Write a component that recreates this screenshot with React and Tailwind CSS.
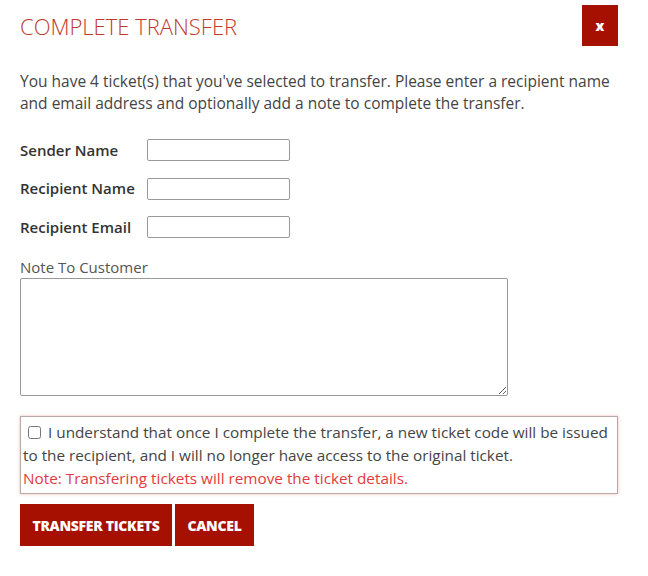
export default function App() {
  return (
    <div className="min-h-screen bg-white font-['Open_Sans',sans-serif] text-[#444]">
      <div className="pl-[20px] pr-[30px]">
        <div className="flex items-start justify-between pt-[5px]">
          <h1 className="mt-[6px] text-[22px] font-light leading-[30px] text-[#c0392b]">
            COMPLETE TRANSFER
          </h1>
          <button className="flex h-[41px] w-[36px] items-center justify-center bg-[#a51000] text-[14px] font-extrabold text-white">
            x
          </button>
        </div>

        <p className="mt-[24px] text-[15.5px] leading-[22px] text-[#444]">
          You have 4 ticket(s) that you've selected to transfer. Please enter a
          recipient name and email address and optionally add a note to complete
          the transfer.
        </p>

        <div className="mt-[25px] flex flex-col gap-[16.5px]">
          {["Sender Name", "Recipient Name", "Recipient Email"].map((label) => (
            <div key={label} className="flex h-[22px] items-center">
              <label className="w-[127px] text-[15px] font-semibold text-[#333]">
                {label}
              </label>
              <input
                type="text"
                className="h-[22px] w-[143px] rounded-[2px] border border-[#999] bg-white px-1 text-[13px]"
              />
            </div>
          ))}
        </div>

        <div className="mt-[19px]">
          <div className="text-[15px] leading-[20px] text-[#555]">
            Note To Customer
          </div>
          <textarea className="mt-[1px] block h-[118px] w-[488px] rounded-[2px] border border-[#999] bg-white" />
        </div>

        <div className="mt-[20px] border border-[#b9a9a9] px-[2px] py-[3.5px] text-[15.3px] leading-[23px] shadow-[0_0_3px_rgba(230,120,120,0.5)]">
          <label className="text-[#444]">
            <input
              type="checkbox"
              className="mr-[7px] ml-[5px] h-[13px] w-[13px] align-[-1px]"
            />
            I understand that once I complete the transfer, a new ticket code
            will be issued to the recipient, and I will no longer have access to
            the original ticket.
          </label>
          <div className="text-[#e4393c]">
            Note: Transfering tickets will remove the ticket details.
          </div>
        </div>

        <div className="mt-[10px] flex gap-[3px]">
          <button className="h-[42px] w-[152px] bg-[#a51000] text-[14px] font-extrabold tracking-[-0.3px] text-white">
            TRANSFER TICKETS
          </button>
          <button className="h-[42px] w-[79px] bg-[#a51000] text-[14px] font-extrabold tracking-[-0.3px] text-white">
            CANCEL
          </button>
        </div>
      </div>
    </div>
  );
}
